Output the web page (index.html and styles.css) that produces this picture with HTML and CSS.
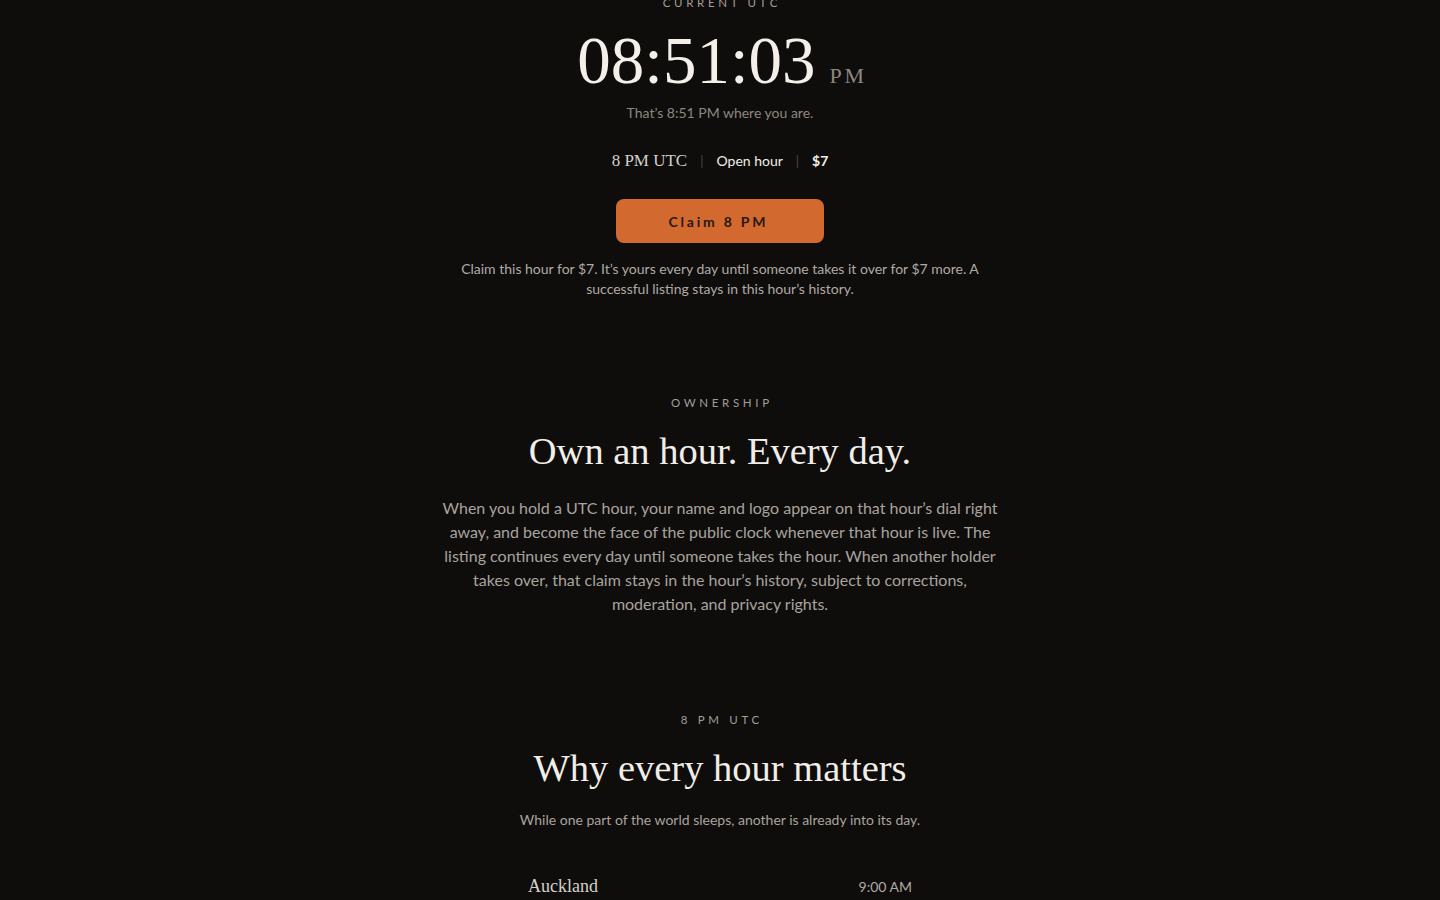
FILE: index.html
```html
<!DOCTYPE html>
<html lang="en">
<head>
<meta charset="utf-8">
<title>Current UTC</title>
<link rel="stylesheet" href="styles.css">
</head>
<body>
<main class="page">
  <section class="hero">
    <div class="eyebrow eyebrow-top">CURRENT UTC</div>
    <div class="clock">
      <span class="clock-time">08:51:03</span>
      <span class="clock-ampm">PM</span>
    </div>
    <p class="local">That’s 8:51 PM where you are.</p>
    <div class="info">
      <span class="info-hour">8 PM UTC</span>
      <span class="sep">|</span>
      <span class="info-text">Open hour</span>
      <span class="sep">|</span>
      <span class="info-price">$7</span>
    </div>
    <button class="claim">Claim 8 PM</button>
    <p class="note">Claim this hour for $7. It’s yours every day until someone takes it over for $7 more. A successful listing stays in this hour’s history.</p>
  </section>

  <section class="block">
    <div class="eyebrow">OWNERSHIP</div>
    <h2 class="title">Own an hour. Every day.</h2>
    <p class="body">When you hold a UTC hour, your name and logo appear on that hour’s dial right away, and become the face of the public clock whenever that hour is live. The listing continues every day until someone takes the hour. When another holder takes over, that claim stays in the hour’s history, subject to corrections, moderation, and privacy rights.</p>
  </section>

  <section class="block">
    <div class="eyebrow">8 PM UTC</div>
    <h2 class="title">Why every hour matters</h2>
    <p class="sub">While one part of the world sleeps, another is already into its day.</p>
    <ul class="cities">
      <li class="city"><span class="city-name">Auckland</span><span class="city-time">9:00 AM</span></li>
      <li class="city"><span class="city-name">Tokyo</span><span class="city-time">5:00 AM</span></li>
    </ul>
  </section>
</main>
</body>
</html>
```
FILE: styles.css
```css
* { box-sizing: border-box; }
html, body { margin: 0; padding: 0; }
body {
  background: #0e0d0c;
  color: #f2ede7;
  font-family: "Lato", "Inter", sans-serif;
  overflow: hidden;
}
.page {
  display: flex;
  flex-direction: column;
  align-items: center;
}
.hero, .block {
  display: flex;
  flex-direction: column;
  align-items: center;
  text-align: center;
}
.eyebrow {
  font-size: 11.5px;
  line-height: 16px;
  letter-spacing: 0.32em;
  color: #a39d97;
  padding-left: 0.32em;
}
.eyebrow-top { margin-top: -5px; }
.clock {
  display: flex;
  align-items: baseline;
  margin-top: 16px;
  padding-left: 4px;
}
.clock-time {
  font-family: "Liberation Serif", serif;
  font-size: 67px;
  line-height: 67px;
  color: #f4efe9;
}
.clock-ampm {
  font-family: "Liberation Serif", serif;
  font-size: 22px;
  letter-spacing: 0.12em;
  color: #8c8781;
  margin-left: 14px;
}
.local {
  margin: 9px 0 0;
  font-size: 14px;
  line-height: 20px;
  color: #8c8781;
}
.info {
  display: flex;
  align-items: baseline;
  gap: 13px;
  margin-top: 26px;
  line-height: 24px;
}
.info-hour {
  font-family: "Liberation Serif", serif;
  font-size: 17px;
  color: #d6d0ca;
}
.sep { color: #4d4945; font-size: 13px; }
.info-text { font-size: 14px; color: #f2ede7; }
.info-price { font-size: 14px; color: #f2ede7; font-weight: 700; }
.claim {
  margin-top: 26px;
  width: 208px;
  height: 44px;
  border: none;
  border-radius: 8px;
  background: #d2692f;
  color: #2a1810;
  font-family: "Lato", sans-serif;
  font-size: 14px;
  font-weight: 700;
  letter-spacing: 0.2em;
  padding-left: 0.2em;
}
.note {
  margin: 16px 0 0;
  max-width: 530px;
  font-size: 14px;
  line-height: 20px;
  color: #b0aaa4;
}
.block { margin-top: 96px; }
.title {
  margin: 16px 0 0;
  font-family: "Liberation Serif", serif;
  font-weight: 400;
  font-size: 38.5px;
  line-height: 48px;
  color: #f2ede7;
}
.body {
  margin: 21px 0 0;
  max-width: 566px;
  font-size: 16px;
  line-height: 24px;
  color: #a9a39d;
}
.sub {
  margin: 18px 0 0;
  font-size: 14px;
  line-height: 20px;
  color: #a9a39d;
}
.cities {
  list-style: none;
  margin: 44px 0 0;
  padding: 0;
  width: 384px;
  display: flex;
  flex-direction: column;
  gap: 24px;
}
.city {
  display: flex;
  justify-content: space-between;
  align-items: baseline;
  line-height: 24px;
}
.city-name {
  font-family: "Liberation Serif", serif;
  font-size: 18px;
  color: #d6d0ca;
}
.city-time {
  font-size: 14px;
  color: #b0aaa4;
}
```
